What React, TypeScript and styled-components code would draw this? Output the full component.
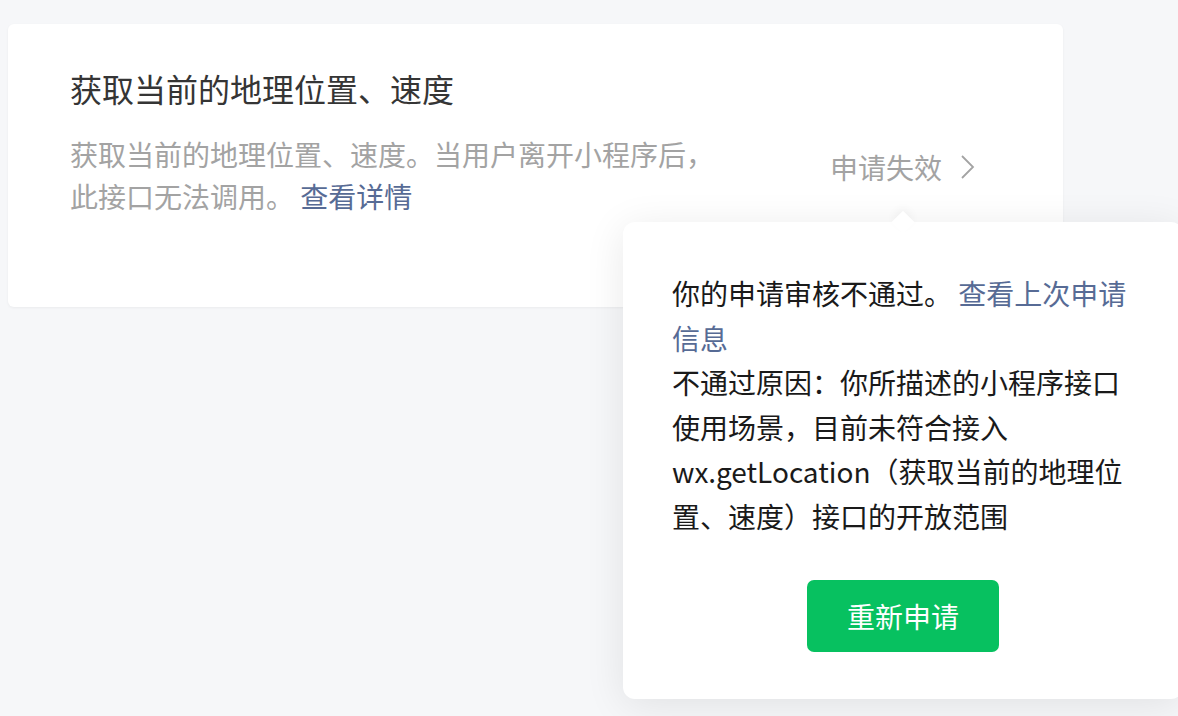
import React from 'react'
import styled, { createGlobalStyle } from 'styled-components'

const GlobalStyle = createGlobalStyle`
    html, body {
        margin: 0;
        padding: 0;
        background: #f6f7f9;
        overflow: hidden;
    }
    body {
        font-family: "Noto Sans CJK SC", "Noto Sans", sans-serif;
    }
`

const Page = styled.div`
    width: 1178px;
    height: 716px;
    padding: 24px 0 0 8px;
    box-sizing: border-box;
`
const Card = styled.div`
    width: 1055px;
    height: 283px;
    box-sizing: border-box;
    padding: 42px 87px 0 62px;
    background: #fff;
    border-radius: 6px;
    box-shadow: 0 1px 3px rgba(0, 0, 0, 0.05);
    display: flex;
    align-items: flex-start;
    justify-content: space-between;
`
const Info = styled.div`
    display: flex;
    flex-direction: column;
`
const Title = styled.div`
    font-size: 32px;
    line-height: 44px;
    color: #353535;
`
const Desc = styled.div`
    margin-top: 23px;
    width: 660px;
    font-size: 28px;
    line-height: 42px;
    color: #a3a3a3;
`
const Link = styled.a`
    color: #576b95;
    text-decoration: none;
    cursor: pointer;
`
const StatusWrap = styled.div`
    position: relative;
    margin-top: 80px;
`
const Status = styled.div`
    display: flex;
    align-items: center;
    gap: 18px;
    font-size: 28px;
    line-height: 42px;
    color: #a3a3a3;
    cursor: pointer;
`
const Popover = styled.div`
    position: absolute;
    top: calc(100% + 34px);
    left: 50%;
    transform: translateX(-50%);
    width: 560px;
    box-sizing: border-box;
    padding: 49px 49px 47px 49px;
    background: #fff;
    border-radius: 12px;
    box-shadow: 0 6px 40px rgba(0, 0, 0, 0.09);
    &::before {
        content: '';
        position: absolute;
        top: -8px;
        left: 50%;
        width: 16px;
        height: 16px;
        background: #fff;
        transform: translateX(-50%) rotate(45deg);
        box-shadow: -3px -3px 8px rgba(0, 0, 0, 0.04);
    }
`
const PopText = styled.div`
    position: relative;
    width: 457px;
    font-size: 28px;
    line-height: 44.6px;
    color: #1a1a1a;
`
const Actions = styled.div`
    display: flex;
    justify-content: center;
    margin-top: 41px;
`
const Button = styled.button`
    width: 192px;
    height: 72px;
    border: none;
    border-radius: 7px;
    background: #07c160;
    color: #fff;
    font-family: inherit;
    font-size: 28px;
    cursor: pointer;
`

const Chevron = () => (
    <svg width="16" height="26" viewBox="0 0 16 26">
        <polyline points="2,2 13,13 2,24" fill="none" stroke="#a3a3a3" strokeWidth="1.8" />
    </svg>
)

export default function App() {
    return (
        <Page>
            <GlobalStyle />
            <Card>
                <Info>
                    <Title>获取当前的地理位置、速度</Title>
                    <Desc>
                        获取当前的地理位置、速度。当用户离开小程序后，此接口无法调用。 <Link>查看详情</Link>
                    </Desc>
                </Info>
                <StatusWrap>
                    <Status>
                        申请失效
                        <Chevron />
                    </Status>
                    <Popover>
                        <PopText>
                            你的申请审核不通过。 <Link>查看上次申请信息</Link>
                            <br />
                            不通过原因：你所描述的小程序接口使用场景，目前未符合接入wx.getLocation（获取当前的地理位置、速度）接口的开放范围
                        </PopText>
                        <Actions>
                            <Button>重新申请</Button>
                        </Actions>
                    </Popover>
                </StatusWrap>
            </Card>
        </Page>
    )
}
